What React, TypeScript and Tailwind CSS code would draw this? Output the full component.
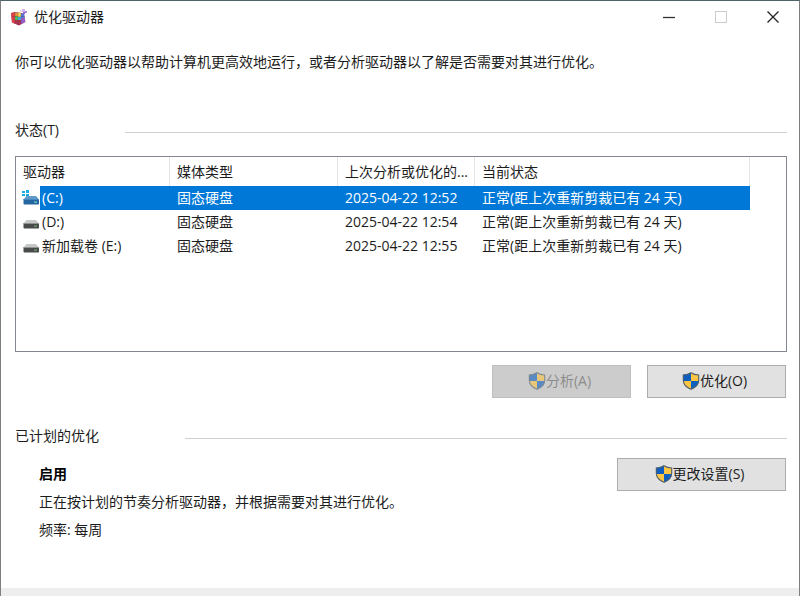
import type { ReactNode } from "react";

type Drive = {
  name: string;
  media: string;
  last: string;
  status: string;
  system?: boolean;
  selected?: boolean;
};

const drives: Drive[] = [
  { name: "(C:)", media: "固态硬盘", last: "2025-04-22 12:52", status: "正常(距上次重新剪裁已有 24 天)", system: true, selected: true },
  { name: "(D:)", media: "固态硬盘", last: "2025-04-22 12:54", status: "正常(距上次重新剪裁已有 24 天)" },
  { name: "新加载卷 (E:)", media: "固态硬盘", last: "2025-04-22 12:55", status: "正常(距上次重新剪裁已有 24 天)" },
];

function DefragIcon() {
  return (
    <svg width="18" height="18" viewBox="0 0 18 18" aria-hidden="true">
      <path d="M1 5 L6 4 L14 5.500 L15.500 14 L9 17.500 L2 14.500 Z" fill="#8f4a86" />
      <path d="M1 5 L5 4 L5 15.800 L2 14.500 Z" fill="#dc4348" />
      <path d="M5 4.500 H8 V8 H5 Z" fill="#f0923a" />
      <path d="M8 4.500 H11 V9 H8 Z" fill="#f2d85a" />
      <path d="M5 8 H8 V12 H5 Z" fill="#4fbf62" />
      <path d="M8 9 H11 V13 H8 Z" fill="#45b4e2" />
      <path d="M11 6 H14.200 V10 H11 Z" fill="#5479da" />
      <path d="M11 10 H15 V14 L11 16 Z" fill="#9a5ccb" />
      <path d="M5 12 H11 V16 L9 17.300 L5 15.600 Z" fill="#b0364f" />
      <path d="M5 4 V15.500 M8 4 V16.500 M11 5 V16 M2 8.500 H15" stroke="#3d2a50" strokeWidth="0.500" opacity="0.500" />
      <rect x="12" y="1" width="3" height="3" fill="#d3b4ef" />
      <rect x="15" y="3" width="2" height="2" fill="#a987e2" />
      <rect x="13" y="4" width="2" height="2" fill="#8a66d4" />
      <rect x="10" y="2" width="2" height="2" fill="#ecd6f7" />
    </svg>
  );
}

function DriveIcon({ system }: { system?: boolean }) {
  return (
    <svg width="18" height="18" viewBox="0 0 18 18" aria-hidden="true">
      {system && (
        <g fill="#18aee5">
          <rect x="0" y="2" width="3" height="2" />
          <rect x="4" y="1" width="3" height="3" />
          <rect x="0" y="5" width="3" height="2" />
          <rect x="4" y="5" width="3" height="3" />
        </g>
      )}
      <path d="M4.500 7 H14 L17 10.500 H1.500 Z" fill={system ? "#5f9ac9" : "#c6c8c7"} />
      <rect x="1.500" y="10" width="15.500" height="5.500" rx="0.800" fill={system ? "#2465a0" : "#484b4a"} />
      <path d="M1.500 10.500 H17" stroke={system ? "#4388c2" : "#8f9291"} />
      <rect x="12" y="12.500" width="3" height="1.200" fill={system ? "#74d5c5" : "#6fa870"} />
    </svg>
  );
}

function ShieldIcon({ faded }: { faded?: boolean }) {
  return (
    <svg width="18" height="18" viewBox="0 0 18 18" className={faded ? "opacity-60" : ""} aria-hidden="true">
      <path d="M9 0.500 C6.500 2.300 4 2.800 1 2.800 V8 C1 12.500 4.500 15.800 9 17.500 Z" fill="#0f5fc0" />
      <path d="M9 0.500 C11.500 2.300 14 2.800 17 2.800 V8 C17 12.500 13.500 15.800 9 17.500 Z" fill="#fcc544" />
      <path d="M1 9 H9 V17.500 C4.800 15.900 1.500 13 1 9 Z" fill="#fcc544" />
      <path d="M17 9 H9 V17.500 C13.200 15.900 16.500 13 17 9 Z" fill="#0f5fc0" />
      <path
        d="M9 0.800 C6.500 2.500 4 3 1.300 3 V8 C1.300 12.400 4.700 15.500 9 17.200 C13.300 15.500 16.700 12.400 16.700 8 V3 C14 3 11.500 2.500 9 0.800 Z"
        fill="none"
        stroke="#4f5f6e"
        strokeWidth="1.100"
      />
    </svg>
  );
}

function GroupTitle({ children, wide }: { children: ReactNode; wide?: boolean }) {
  return (
    <div className="flex items-center">
      <h2 className={wide ? "w-[170px]" : "w-[110px]"}>{children}</h2>
      <div className="mt-1 h-px flex-1 bg-[#cfcfcf]" />
    </div>
  );
}

function ShieldButton({ children, disabled, wide }: { children: ReactNode; disabled?: boolean; wide?: boolean }) {
  return (
    <button
      type="button"
      disabled={disabled}
      className={`flex h-[33px] items-center justify-center border border-[#adadad] bg-[#e1e1e1] pr-1 pb-px disabled:border-[#bfbfbf] disabled:bg-[#cccccc] disabled:text-[#8c8c8c] ${wide ? "w-[169px]" : "w-[139px]"}`}
    >
      <ShieldIcon faded={disabled} />
      <span>{children}</span>
    </button>
  );
}

export default function App() {
  return (
    <div className="flex min-h-screen flex-col border-x border-t border-x-[#7f7f7f] border-t-[#4e6468] bg-white font-['Open_Sans','Noto_Sans_CJK_SC',sans-serif] text-[14px] leading-5 text-[#1c1c1c]">
      <header className="flex h-8 items-center pl-[9px]">
        <DefragIcon />
        <h1 className="ml-1.5 flex-1">优化驱动器</h1>
        <div className="flex h-full">
          <button type="button" aria-label="最小化" className="flex w-[52px] items-center justify-center">
            <svg width="12" height="12" viewBox="0 0 12 12"><path d="M0 6.500 H12" stroke="#333" strokeWidth="1.300" /></svg>
          </button>
          <button type="button" aria-label="最大化" disabled className="flex w-[52px] items-center justify-center">
            <svg width="12" height="12" viewBox="0 0 12 12"><rect x="0.500" y="0.500" width="11" height="11" fill="none" stroke="#ccc" /></svg>
          </button>
          <button type="button" aria-label="关闭" className="flex w-[52px] items-center justify-center">
            <svg width="12" height="12" viewBox="0 0 12 12"><path d="M0.500 0.500 L11.500 11.500 M11.500 0.500 L0.500 11.500" stroke="#222" strokeWidth="1.300" /></svg>
          </button>
        </div>
      </header>

      <main className="flex-1 pr-3 pl-3.5">
        <p className="mt-[19px]">你可以优化驱动器以帮助计算机更高效地运行，或者分析驱动器以了解是否需要对其进行优化。</p>

        <section className="mt-12">
          <GroupTitle>状态(T)</GroupTitle>
          <div className="mt-4 h-[196px] border border-[#828790]">
            <table className="w-full table-fixed border-separate border-spacing-0 text-left whitespace-nowrap">
              <colgroup>
                <col className="w-[154px]" />
                <col className="w-[168px]" />
                <col className="w-[137px]" />
                <col className="w-[275px]" />
                <col />
              </colgroup>
              <thead>
                <tr className="h-[29px]">
                  <th className="border-r border-[#e5e5e5] py-0 pl-[7px] font-normal">驱动器</th>
                  <th className="border-r border-[#e5e5e5] py-0 pl-[7px] font-normal">媒体类型</th>
                  <th className="border-r border-[#e5e5e5] py-0 pl-[7px] font-normal">上次分析或优化的...</th>
                  <th className="border-r border-[#e5e5e5] py-0 pl-[7px] font-normal">当前状态</th>
                  <td />
                </tr>
              </thead>
              <tbody>
                {drives.map((d) => {
                  const tone = d.selected ? "bg-[#0078d7] text-white" : "";
                  return (
                    <tr key={d.name} className="h-6" aria-selected={!!d.selected}>
                      <td className="p-0">
                        <div className="flex h-6 items-center">
                          <span className="flex w-6 justify-end">
                            <DriveIcon system={d.system} />
                          </span>
                          <span className={`flex h-6 flex-1 items-center pl-0.5 ${tone}`}>{d.name}</span>
                        </div>
                      </td>
                      <td className={`py-0 pl-[7px] ${tone}`}>{d.media}</td>
                      <td className={`py-0 pl-[7px] ${tone}`}>{d.last}</td>
                      <td className={`py-0 pl-[7px] ${tone}`}>{d.status}</td>
                      <td />
                    </tr>
                  );
                })}
              </tbody>
            </table>
          </div>
          <div className="mt-[13px] flex justify-end gap-4 pr-px">
            <ShieldButton disabled>分析(A)</ShieldButton>
            <ShieldButton>优化(O)</ShieldButton>
          </div>
        </section>

        <section className="mt-7">
          <GroupTitle wide>已计划的优化</GroupTitle>
          <div className="mt-3 flex items-start justify-between pr-px pl-6">
            <div className="pt-1.5">
              <p className="font-bold text-black">启用</p>
              <p className="mt-2">正在按计划的节奏分析驱动器，并根据需要对其进行优化。</p>
              <p className="mt-2">频率: 每周</p>
            </div>
            <ShieldButton wide>更改设置(S)</ShieldButton>
          </div>
        </section>
      </main>
      <footer className="h-2 bg-[#eeeeee]" />
    </div>
  );
}
